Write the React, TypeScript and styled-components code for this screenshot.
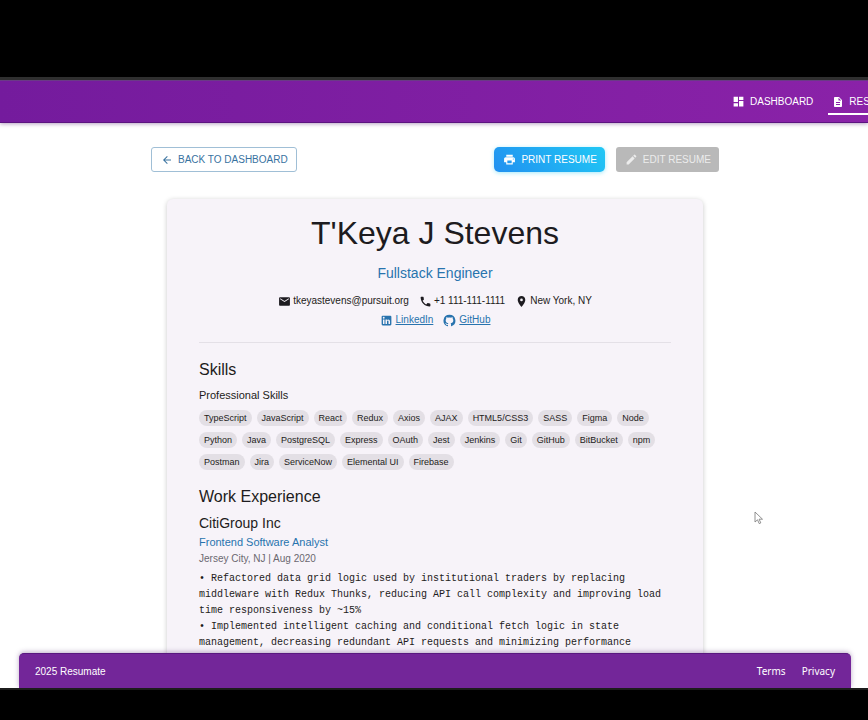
import React from "react";
import styled, { createGlobalStyle, css } from "styled-components";
import {
  MdArrowBack,
  MdDashboard,
  MdDescription,
  MdEdit,
  MdEmail,
  MdPhone,
  MdPlace,
  MdPrint,
} from "react-icons/md";

const GlobalStyle = createGlobalStyle`
  *, *::before, *::after { box-sizing: border-box; }
  body {
    margin: 0;
    background: #000;
    color: #1d1b20;
    font-family: "Liberation Sans", Arial, sans-serif;
  }
  h1, h2, h3, p, ul { margin: 0; padding: 0; font-weight: 400; }
  ul { list-style: none; }
  svg { display: block; flex: none; }
`;

const Screen = styled.div`
  height: 100vh;
  padding: 77px 0 30px;
  display: flex;
  flex-direction: column;
  background: #000;
`;

const Window = styled.div`
  flex: 1;
  min-height: 0;
  display: flex;
  flex-direction: column;
  overflow: hidden;
  background: #fff;
  border-top: 3px solid #2f2f2f;
  border-bottom: 2px solid #1c1c1c;
  position: relative;
`;

const AppBar = styled.header`
  flex: none;
  height: 43px;
  display: flex;
  justify-content: flex-end;
  align-items: center;
  background: linear-gradient(90deg, #741b9d, #8a22a8);
  border-top: 1px solid #6a3a86;
  border-bottom: 1px solid #5c1480;
  box-shadow: 0 1px 4px rgba(70, 20, 100, 0.4);
  z-index: 1;
`;

const Nav = styled.nav`
  flex: 0 1 140px;
  min-width: 0;
  overflow: hidden;
  display: flex;
  gap: 11px;
`;

const NavLink = styled.a<{ $active?: boolean }>`
  flex: none;
  display: flex;
  align-items: center;
  gap: 5px;
  height: 27px;
  padding: 2px 4px 0;
  color: #fff;
  font-size: 10px;
  text-decoration: none;
  border-bottom: 2px solid ${(p) => (p.$active ? "#fff" : "transparent")};
`;

const Main = styled.main`
  flex: 1;
  min-height: 0;
  overflow: hidden;
  padding: 24px 16px 0 18px;
`;

const Container = styled.div`
  max-width: 568px;
  margin: 0 auto;
`;

const Toolbar = styled.div`
  display: flex;
  gap: 11px;
  margin-bottom: 27px;
`;

const variants = {
  outlined: css`
    margin-right: auto;
    background: #fff;
    border: 1px solid #a0bfd6;
    color: #38729f;
  `,
  primary: css`
    background: linear-gradient(45deg, #2190f0, #21c8f5);
    border: 0;
    color: #fff;
    border-radius: 5px;
    box-shadow: 0 1px 4px rgba(33, 203, 243, 0.4);
  `,
  disabled: css`
    background: #b9b9b9;
    border: 0;
    color: #ececec;
  `,
};

const Button = styled.button<{ $variant: keyof typeof variants }>`
  display: flex;
  align-items: center;
  gap: 5px;
  height: 25px;
  padding: 0 8px 0 9px;
  border-radius: 3px;
  font-family: inherit;
  font-size: 10px;
  white-space: nowrap;
  ${(p) => variants[p.$variant]}
`;

const Card = styled.article`
  margin: 0 16px;
  padding: 15px 32px 32px;
  background: #f7f3f9;
  border-radius: 6px;
  box-shadow: 0 1px 5px rgba(0, 0, 0, 0.22);
`;

const Intro = styled.header`
  display: flex;
  flex-direction: column;
  align-items: center;
  padding-bottom: 14px;
  border-bottom: 1px solid #e4e0e7;
`;

const Name = styled.h1`
  font-size: 32px;
  line-height: 38px;
`;

const Role = styled.p`
  margin-top: 13px;
  font-size: 14px;
  line-height: 16px;
  color: #2873ae;
`;

const ContactRow = styled.ul<{ $first?: boolean }>`
  display: flex;
  flex-wrap: wrap;
  justify-content: center;
  gap: 10px;
  margin-top: ${(p) => (p.$first ? 12 : 3)}px;
`;

const Contact = styled.li`
  display: flex;
  align-items: center;
  gap: 2px;
  font-size: 10px;
  line-height: 16px;
`;

const ProfileLink = styled.a`
  display: flex;
  align-items: center;
  gap: 3px;
  color: #2873ae;
`;

const SectionTitle = styled.h2`
  margin-top: 17px;
  font-size: 16px;
  line-height: 20px;
`;

const SubTitle = styled.h3`
  margin-top: 7px;
  font-size: 11px;
  line-height: 16px;
`;

const Chips = styled.ul`
  display: flex;
  flex-wrap: wrap;
  gap: 6px 5px;
  margin-top: 7px;
`;

const Chip = styled.li`
  padding: 0 5px;
  border-radius: 8px;
  background: #e3dfe5;
  font-size: 9px;
  line-height: 16px;
`;

const Company = styled.h3`
  margin-top: 8px;
  font-size: 14px;
  line-height: 16px;
`;

const Position = styled.p`
  margin-top: 3px;
  font-size: 11px;
  line-height: 16px;
  color: #2873ae;
`;

const Meta = styled.p`
  margin-top: 1px;
  font-size: 10px;
  line-height: 16px;
  color: #6b6870;
`;

const Description = styled.p`
  margin-top: 4px;
  font-family: "Liberation Mono", monospace;
  font-size: 10px;
  line-height: 16px;
  white-space: pre-line;
`;

const Footer = styled.footer`
  flex: none;
  height: 35px;
  margin: 0 17px 0 19px;
  padding: 0 16px;
  display: flex;
  align-items: center;
  justify-content: space-between;
  background: #732699;
  border-top: 1px solid #5a1880;
  border-radius: 5px 5px 0 0;
  box-shadow: 0 -1px 5px rgba(70, 20, 100, 0.35);
  color: #fff;
  font-size: 10px;
  z-index: 1;
`;

const FooterLinks = styled.nav`
  display: flex;
  gap: 16px;
  font-family: "Noto Sans", sans-serif;
  font-size: 10px;
`;

const FooterLink = styled.a`
  color: #fff;
  text-decoration: none;
`;

const Pointer = styled.svg`
  position: absolute;
  left: 754px;
  top: 431px;
`;

const LinkedInIcon = () => (
  <svg width="13" height="13" viewBox="0 0 24 24" fill="currentColor" aria-hidden="true">
    <path d="M19 3a2 2 0 0 1 2 2v14a2 2 0 0 1-2 2H5a2 2 0 0 1-2-2V5a2 2 0 0 1 2-2h14m-.5 15.5v-5.3a3.26 3.26 0 0 0-3.26-3.26c-.85 0-1.84.52-2.32 1.3v-1.11h-2.79v8.37h2.79v-4.93c0-.77.62-1.4 1.39-1.4a1.4 1.4 0 0 1 1.4 1.4v4.93h2.79M6.88 8.56a1.68 1.68 0 0 0 1.68-1.68c0-.93-.75-1.69-1.68-1.69a1.69 1.69 0 0 0-1.69 1.69c0 .93.76 1.68 1.69 1.68m1.39 9.94v-8.37H5.5v8.37h2.77z" />
  </svg>
);

const GitHubIcon = () => (
  <svg width="13" height="13" viewBox="0 0 24 24" fill="currentColor" aria-hidden="true">
    <path d="M12 1.27a11 11 0 00-3.48 21.46c.55.09.73-.28.73-.55v-1.84c-3.03.64-3.67-1.46-3.67-1.46-.55-1.29-1.28-1.65-1.28-1.65-.92-.65.1-.65.1-.65 1.1 0 1.73 1.1 1.73 1.1.92 1.65 2.57 1.2 3.21.92a2 2 0 01.64-1.47c-2.47-.27-5.04-1.19-5.04-5.5 0-1.1.46-2.1 1.2-2.84a3.76 3.76 0 010-2.93s.91-.28 3.11 1.1c1.8-.49 3.7-.49 5.5 0 2.1-1.38 3.02-1.1 3.02-1.1a3.76 3.76 0 01.1 2.83c.74.74 1.2 1.74 1.2 2.94 0 4.21-2.57 5.13-5.04 5.4.45.37.82.92.82 2.02v3.03c0 .27.1.64.73.55A11 11 0 0012 1.27" />
  </svg>
);

const skills = [
  "TypeScript", "JavaScript", "React", "Redux", "Axios", "AJAX", "HTML5/CSS3",
  "SASS", "Figma", "Node", "Python", "Java", "PostgreSQL", "Express", "OAuth",
  "Jest", "Jenkins", "Git", "GitHub", "BitBucket", "npm", "Postman", "Jira",
  "ServiceNow", "Elemental UI", "Firebase",
];

const description = [
  "• Refactored data grid logic used by institutional traders by replacing middleware with Redux Thunks, reducing API call complexity and improving load time responsiveness by ~15%",
  "• Implemented intelligent caching and conditional fetch logic in state management, decreasing redundant API requests and minimizing performance",
].join("\n");

export default function App() {
  return (
    <Screen>
      <GlobalStyle />
      <Window>
        <AppBar>
          <Nav aria-label="Main">
            <NavLink href="#dashboard">
              <MdDashboard size={13} />
              DASHBOARD
            </NavLink>
            <NavLink href="#resumes" $active aria-current="page">
              <MdDescription size={12} />
              RESUMES
            </NavLink>
          </Nav>
        </AppBar>

        <Main>
          <Container>
            <Toolbar>
              <Button type="button" $variant="outlined">
                <MdArrowBack size={12} />
                BACK TO DASHBOARD
              </Button>
              <Button type="button" $variant="primary">
                <MdPrint size={13} />
                PRINT RESUME
              </Button>
              <Button type="button" $variant="disabled" disabled>
                <MdEdit size={13} />
                EDIT RESUME
              </Button>
            </Toolbar>

            <Card>
              <Intro>
                <Name>T'Keya J Stevens</Name>
                <Role>Fullstack Engineer</Role>
                <ContactRow $first>
                  <Contact><MdEmail size={13} />tkeyastevens@pursuit.org</Contact>
                  <Contact><MdPhone size={13} />+1 111-111-1111</Contact>
                  <Contact><MdPlace size={13} />New York, NY</Contact>
                </ContactRow>
                <ContactRow>
                  <Contact><ProfileLink href="#linkedin"><LinkedInIcon />LinkedIn</ProfileLink></Contact>
                  <Contact><ProfileLink href="#github"><GitHubIcon />GitHub</ProfileLink></Contact>
                </ContactRow>
              </Intro>

              <section>
                <SectionTitle>Skills</SectionTitle>
                <SubTitle>Professional Skills</SubTitle>
                <Chips>
                  {skills.map((skill) => (
                    <Chip key={skill}>{skill}</Chip>
                  ))}
                </Chips>
              </section>

              <section>
                <SectionTitle>Work Experience</SectionTitle>
                <Company>CitiGroup Inc</Company>
                <Position>Frontend Software Analyst</Position>
                <Meta>Jersey City, NJ | Aug 2020</Meta>
                <Description>{description}</Description>
              </section>
            </Card>
          </Container>
        </Main>

        <Footer>
          <span>2025 Resumate</span>
          <FooterLinks aria-label="Legal">
            <FooterLink href="#terms">Terms</FooterLink>
            <FooterLink href="#privacy">Privacy</FooterLink>
          </FooterLinks>
        </Footer>

        <Pointer width="10" height="14" viewBox="0 0 10 14" aria-hidden="true">
          <path d="M1 1v10l2.500-2.200 1.700 3.800 1.600-.7-1.700-3.700H8.500z" fill="#fff" stroke="#777" strokeWidth="0.800" />
        </Pointer>
      </Window>
    </Screen>
  );
}
